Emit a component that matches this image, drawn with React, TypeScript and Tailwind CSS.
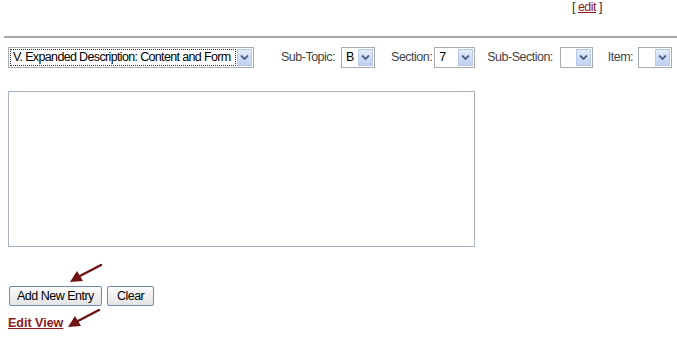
import React from "react";

function Chevron() {
  return (
    <span className="flex h-[17px] w-[15px] shrink-0 items-center justify-center border border-[#b7c9e6] bg-gradient-to-b from-[#e3ecfb] to-[#bfd1f0]">
      <svg width="9" height="7" viewBox="0 0 9 7">
        <path d="M1 1.5 L4.5 5 L8 1.5" fill="none" stroke="#4d6185" strokeWidth="1.8" />
      </svg>
    </span>
  );
}

function Select({ value, width, focused }: { value: string; width: number; focused?: boolean }) {
  return (
    <div
      className="flex h-[21px] shrink-0 items-center justify-between border border-[#a5acb5] bg-white pl-[1px] pr-[1px]"
      style={{ width }}
    >
      <span
        className={
          focused
            ? "mr-[1px] flex h-[17px] flex-1 items-center overflow-hidden whitespace-nowrap border border-dotted border-[#333] pl-[2px] tracking-[-0.65px] text-black"
            : "flex h-[17px] flex-1 items-center whitespace-nowrap pl-[3px] text-black"
        }
      >
        {value}
      </span>
      <Chevron />
    </div>
  );
}

function Arrow() {
  return (
    <svg width="36" height="22" viewBox="0 0 36 22">
      <path d="M33 2 L10 14" stroke="#6e1414" strokeWidth="2.5" strokeLinecap="round" />
      <polygon points="2,19 9,8 15,18" fill="#6e1414" />
    </svg>
  );
}

export default function App() {
  return (
    <div className="h-[348px] w-[677px] bg-white font-['Liberation_Sans',Arial,sans-serif] text-[12.5px] tracking-[-0.5px] text-[#333]">
      <div className="flex justify-end pr-[75px] leading-[14px]">
        <span>
          [ <a className="text-[#8b1a1a] underline">edit</a> ]
        </span>
      </div>
      <div className="ml-[4px] mt-[22px] h-[2px] bg-[#a6a6a6]" />
      <div className="mt-[9px] flex items-center whitespace-nowrap pl-[8px] text-[#444]">
        <Select value="V. Expanded Description: Content and Form" width={246} focused />
        <span className="ml-[27px]">Sub-Topic:</span>
        <div className="ml-[6px]"><Select value="B" width={34} /></div>
        <span className="ml-[16px]">Section:</span>
        <div className="ml-[2px]"><Select value="7" width={41} /></div>
        <span className="ml-[12px]">Sub-Section:</span>
        <div className="ml-[7px]"><Select value="" width={33} /></div>
        <span className="ml-[15px]">Item:</span>
        <div className="ml-[5px]"><Select value="" width={34} /></div>
      </div>
      <div className="ml-[8px] mt-[23px] h-[156px] w-[467px] border border-[#a9b3c2] bg-white" />
      <div className="ml-[68px] mt-[16px]">
        <Arrow />
      </div>
      <div className="ml-[9px] mt-[1px] flex gap-[5px] text-black">
        <button className="h-[20px] rounded-[2px] border border-[#6f8aad] bg-gradient-to-b from-[#fbfbfb] to-[#e4e4e4] px-[7px]">
          Add New Entry
        </button>
        <button className="h-[20px] rounded-[2px] border border-[#6f8aad] bg-gradient-to-b from-[#fbfbfb] to-[#e4e4e4] px-[9px]">
          Clear
        </button>
      </div>
      <div className="ml-[8px] mt-[2px] flex items-end">
        <a className="font-bold tracking-normal text-[#8b1a1a] underline">Edit View</a>
        <div className="mb-[3px] ml-[3px]">
          <Arrow />
        </div>
      </div>
    </div>
  );
}
